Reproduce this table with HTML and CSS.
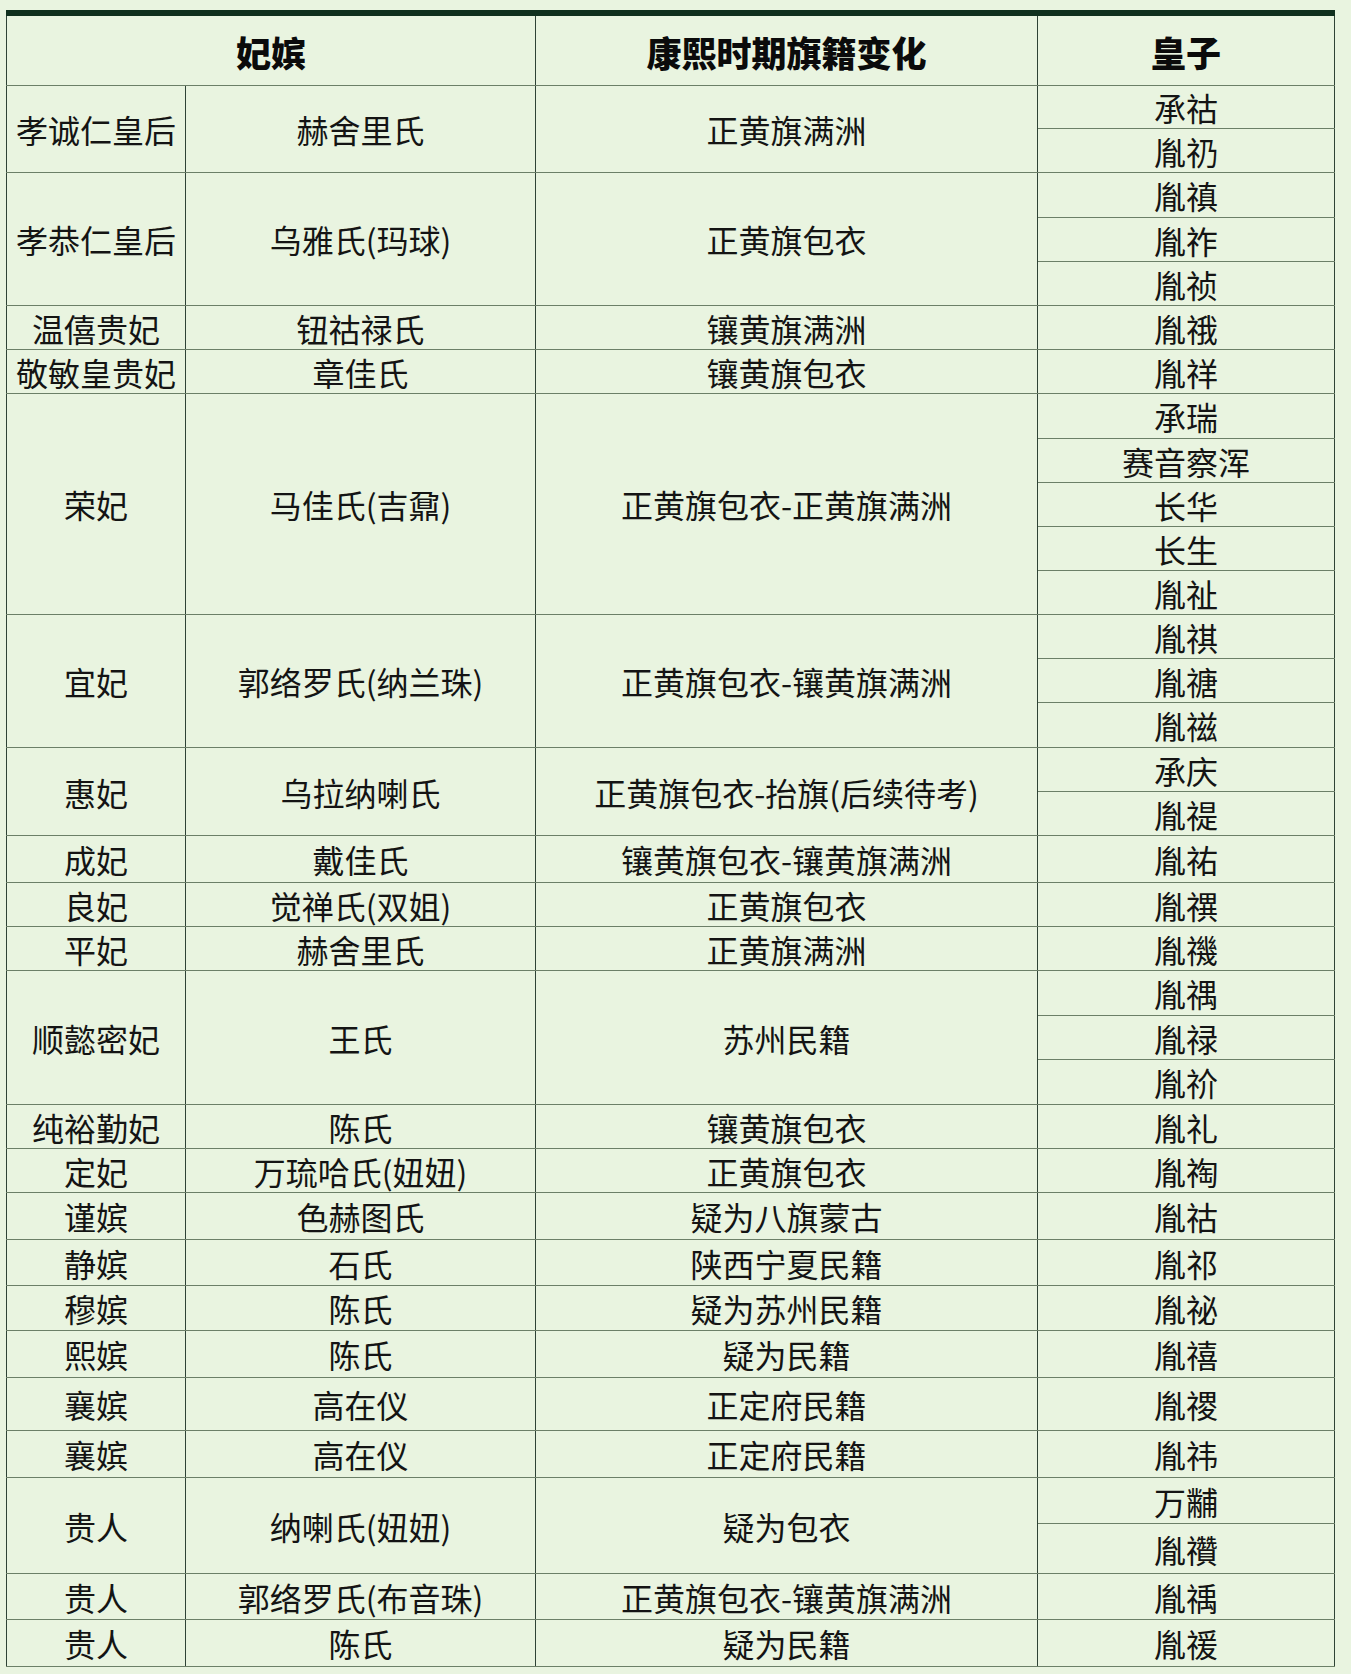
FILE: index.html
```html
<!DOCTYPE html>
<html lang="zh-CN">
<head>
<meta charset="utf-8">
<title>康熙妃嫔旗籍</title>
<link rel="stylesheet" href="styles.css">
</head>
<body>
<div class="page">
<table class="grid">
  <colgroup>
    <col class="c1"><col class="c2"><col class="c3"><col class="c4">
  </colgroup>
  <thead>
    <tr class="head">
      <th colspan="2">妃嫔</th>
      <th>康熙时期旗籍变化</th>
      <th>皇子</th>
    </tr>
  </thead>
  <tbody>
    <tr class="r43"><td rowspan="2">孝诚仁皇后</td><td rowspan="2">赫舍里氏</td><td rowspan="2">正黄旗满洲</td><td>承祜</td></tr>
    <tr><td>胤礽</td></tr>
    <tr class="r45"><td rowspan="3">孝恭仁皇后</td><td rowspan="3">乌雅氏(玛球)</td><td rowspan="3">正黄旗包衣</td><td>胤禛</td></tr>
    <tr><td>胤祚</td></tr>
    <tr><td>胤祯</td></tr>
    <tr><td>温僖贵妃</td><td>钮祜禄氏</td><td>镶黄旗满洲</td><td>胤䄉</td></tr>
    <tr><td>敬敏皇贵妃</td><td>章佳氏</td><td>镶黄旗包衣</td><td>胤祥</td></tr>
    <tr class="r45"><td rowspan="5">荣妃</td><td rowspan="5">马佳氏(吉鼐)</td><td rowspan="5">正黄旗包衣-正黄旗满洲</td><td>承瑞</td></tr>
    <tr><td>赛音察浑</td></tr>
    <tr><td>长华</td></tr>
    <tr><td>长生</td></tr>
    <tr><td>胤祉</td></tr>
    <tr><td rowspan="3">宜妃</td><td rowspan="3">郭络罗氏(纳兰珠)</td><td rowspan="3">正黄旗包衣-镶黄旗满洲</td><td>胤祺</td></tr>
    <tr><td>胤禟</td></tr>
    <tr class="r45"><td>胤禌</td></tr>
    <tr><td rowspan="2">惠妃</td><td rowspan="2">乌拉纳喇氏</td><td rowspan="2">正黄旗包衣-抬旗(后续待考)</td><td>承庆</td></tr>
    <tr><td>胤禔</td></tr>
    <tr class="r47"><td>成妃</td><td>戴佳氏</td><td>镶黄旗包衣-镶黄旗满洲</td><td>胤祐</td></tr>
    <tr><td>良妃</td><td>觉禅氏(双姐)</td><td>正黄旗包衣</td><td>胤禩</td></tr>
    <tr><td>平妃</td><td>赫舍里氏</td><td>正黄旗满洲</td><td>胤禨</td></tr>
    <tr class="r45"><td rowspan="3">顺懿密妃</td><td rowspan="3">王氏</td><td rowspan="3">苏州民籍</td><td>胤禑</td></tr>
    <tr><td>胤禄</td></tr>
    <tr class="r45"><td>胤祄</td></tr>
    <tr><td>纯裕勤妃</td><td>陈氏</td><td>镶黄旗包衣</td><td>胤礼</td></tr>
    <tr><td>定妃</td><td>万琉哈氏(妞妞)</td><td>正黄旗包衣</td><td>胤祹</td></tr>
    <tr class="r47"><td>谨嫔</td><td>色赫图氏</td><td>疑为八旗蒙古</td><td>胤祜</td></tr>
    <tr class="r46"><td>静嫔</td><td>石氏</td><td>陕西宁夏民籍</td><td>胤祁</td></tr>
    <tr class="r45"><td>穆嫔</td><td>陈氏</td><td>疑为苏州民籍</td><td>胤祕</td></tr>
    <tr class="r47"><td>熙嫔</td><td>陈氏</td><td>疑为民籍</td><td>胤禧</td></tr>
    <tr class="r53"><td>襄嫔</td><td>高在仪</td><td>正定府民籍</td><td>胤禝</td></tr>
    <tr class="r47"><td>襄嫔</td><td>高在仪</td><td>正定府民籍</td><td>胤祎</td></tr>
    <tr class="r46"><td rowspan="2">贵人</td><td rowspan="2">纳喇氏(妞妞)</td><td rowspan="2">疑为包衣</td><td>万黼</td></tr>
    <tr class="r50"><td>胤禶</td></tr>
    <tr class="r46"><td>贵人</td><td>郭络罗氏(布音珠)</td><td>正黄旗包衣-镶黄旗满洲</td><td>胤䄔</td></tr>
    <tr class="r47"><td>贵人</td><td>陈氏</td><td>疑为民籍</td><td>胤禐</td></tr>
  </tbody>
</table>
</div>
</body>
</html>
```

FILE: styles.css
```css
html, body {
  margin: 0;
  padding: 0;
  background: #e9f4e0;
}

.page {
  width: 1351px;
  min-height: 1674px;
  padding: 10px 0 0 6px;
  box-sizing: border-box;
  background: #e9f4e0;
}

.grid {
  border-collapse: collapse;
  table-layout: fixed;
  width: 1329px;
  font-family: "Noto Sans CJK SC", "Noto Sans", sans-serif;
  color: #141414;
  border-top: 6px solid #10301e;
}

.c1 { width: 179px; }
.c2 { width: 350px; }
.c3 { width: 502px; }
.c4 { width: 297px; }

.grid th,
.grid td {
  padding: 0;
  text-align: center;
  vertical-align: middle;
  border-left: 1px solid #2f4336;
  border-right: 1px solid #2f4336;
  border-top: 1px solid #6c7f68;
  border-bottom: 1px solid #6c7f68;
  white-space: nowrap;
  line-height: 36px;
}

.grid th {
  font-size: 35px;
  font-weight: 900;
  color: #0b0b0b;
  height: 67px;
  padding-top: 2px;
  border-top: none;
}

.grid td {
  font-size: 32px;
  font-weight: 400;
}

.grid tbody tr { height: 44px; }
.grid tbody tr.r43 { height: 43px; }
.grid tbody tr.r45 { height: 45px; }
.grid tbody tr.r46 { height: 46px; }
.grid tbody tr.r47 { height: 47px; }
.grid tbody tr.r50 { height: 50px; }
.grid tbody tr.r53 { height: 53px; }
```
